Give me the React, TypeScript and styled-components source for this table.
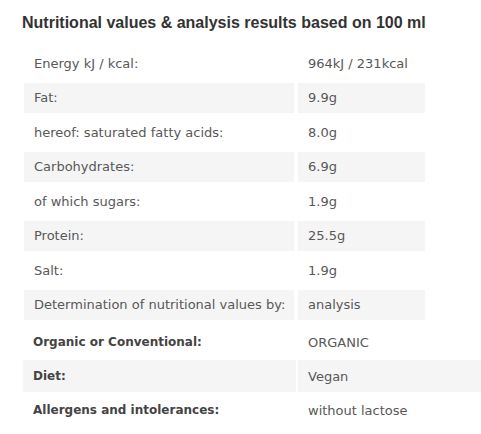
import styled, { createGlobalStyle } from "styled-components";

const GlobalStyle = createGlobalStyle`
  html, body { margin: 0; padding: 0; background: #FFFFFF; overflow: hidden; }
  body { font-family: "DejaVu Sans", "Liberation Sans", sans-serif; }
`;

const Page = styled.div`
  width: 481px;
  height: 434px;
  overflow: hidden;
  padding: 12px 0 0 22px;
  box-sizing: border-box;
`;

const Heading = styled.h3`
  margin: 0 0 10px;
  font-family: "Liberation Sans", Arial, sans-serif;
  font-size: 16px;
  font-weight: 700;
  color: #333333;
  line-height: 22px;
  white-space: nowrap;
`;

const Table = styled.table<{ $spacing: number; $width: number; $left: number }>`
  border-collapse: separate;
  border-spacing: ${({ $spacing }) => $spacing}px;
  width: ${({ $width }) => $width}px;
  margin: 0 0 0 ${({ $left }) => $left}px;
  table-layout: fixed;
  & tr:nth-child(even) td { background: #F5F5F5; }
`;

const Cell = styled.td<{ $w?: number; $h: number; $bold?: boolean }>`
  box-sizing: border-box;
  width: ${({ $w }) => ($w ? `${$w}px` : "auto")};
  height: ${({ $h }) => $h}px;
  padding: 0 9px 0 10px;
  font-size: ${({ $bold }) => ($bold ? 12 : 13)}px;
  color: ${({ $bold }) => ($bold ? "#444444" : "#585858")};
  font-weight: ${({ $bold }) => ($bold ? 700 : 400)};
  white-space: nowrap;
  vertical-align: middle;
`;

const nutrition: [string, string][] = [
  ["Energy kJ / kcal:", "964kJ / 231kcal"],
  ["Fat:", "9.9g"],
  ["hereof: saturated fatty acids:", "8.0g"],
  ["Carbohydrates:", "6.9g"],
  ["of which sugars:", "1.9g"],
  ["Protein:", "25.5g"],
  ["Salt:", "1.9g"],
  ["Determination of nutritional values by:", "analysis"],
];

const extra: [string, string][] = [
  ["Organic or Conventional:", "ORGANIC"],
  ["Diet:", "Vegan"],
  ["Allergens and intolerances:", "without lactose"],
];

export default function App() {
  return (
    <>
      <GlobalStyle />
      <Page>
        <Heading>Nutritional values &amp; analysis results based on 100 ml</Heading>
        <Table $spacing={4} $width={409} $left={-2}>
          <tbody>
            {nutrition.map(([k, v]) => (
              <tr key={k}>
                <Cell $w={270} $h={30.5}>{k}</Cell>
                <Cell $h={30.5}>{v}</Cell>
              </tr>
            ))}
          </tbody>
        </Table>
        <Table $spacing={2} $width={520} $left={-1}>
          <tbody>
            {extra.map(([k, v]) => (
              <tr key={k}>
                <Cell $w={273} $h={32} $bold>{k}</Cell>
                <Cell $h={32}>{v}</Cell>
              </tr>
            ))}
          </tbody>
        </Table>
      </Page>
    </>
  );
}
